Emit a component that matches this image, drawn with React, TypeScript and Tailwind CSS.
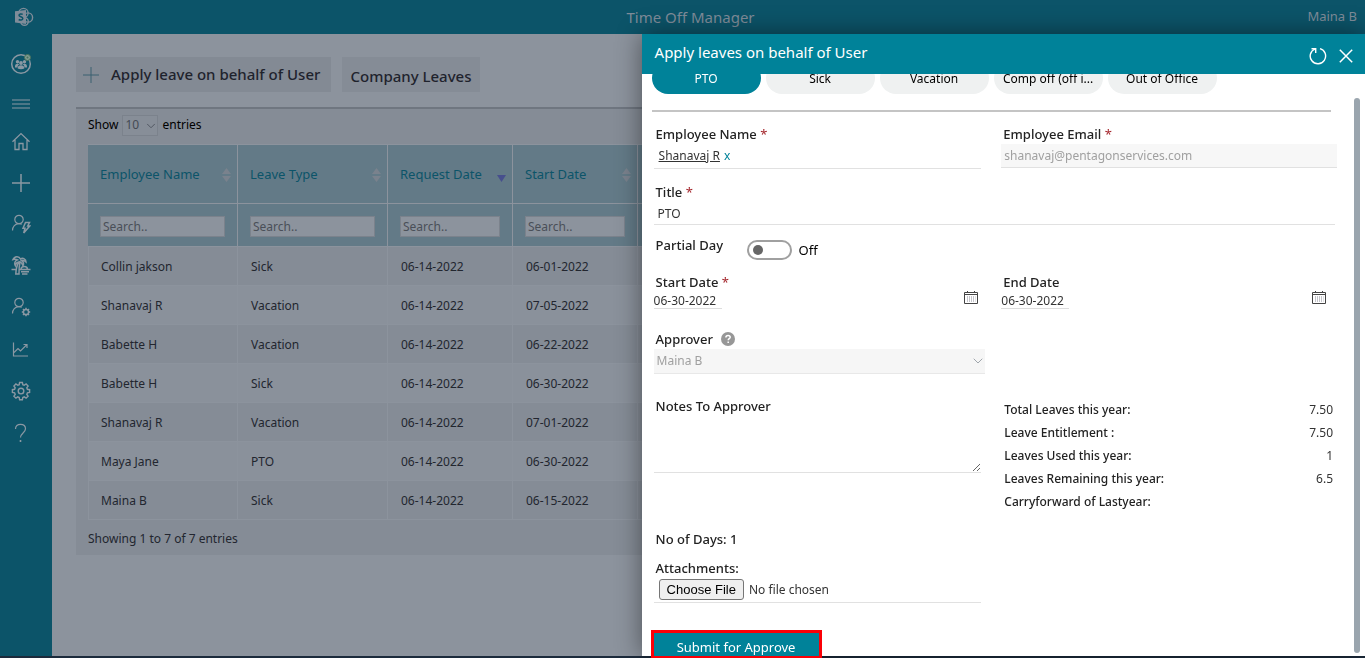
import React from "react";
import { ChevronDown } from "lucide-react";

const rows = [
  ["Collin jakson", "Sick", "06-14-2022", "06-01-2022"],
  ["Shanavaj R", "Vacation", "06-14-2022", "07-05-2022"],
  ["Babette H", "Vacation", "06-14-2022", "06-22-2022"],
  ["Babette H", "Sick", "06-14-2022", "06-30-2022"],
  ["Shanavaj R", "Vacation", "06-14-2022", "07-01-2022"],
  ["Maya Jane", "PTO", "06-14-2022", "06-30-2022"],
  ["Maina B", "Sick", "06-14-2022", "06-15-2022"],
];

const columns = ["Employee Name", "Leave Type", "Request Date", "Start Date"];

const leaveTypes = ["PTO", "Sick", "Vacation", "Comp off (off i...", "Out of Office"];

const balances = [
  ["Total Leaves this year:", "7.50"],
  ["Leave Entitlement :", "7.50"],
  ["Leaves Used this year:", "1"],
  ["Leaves Remaining this year:", "6.5"],
  ["Carryforward of Lastyear:", ""],
];

type IconProps = { children: React.ReactNode };

function NavIcon({ children }: IconProps) {
  return (
    <svg
      width="20"
      height="20"
      viewBox="0 0 20 20"
      fill="none"
      stroke="currentColor"
      strokeWidth="1.2"
      aria-hidden="true"
    >
      {children}
    </svg>
  );
}

function SharePointLogo() {
  return (
    <svg width="20" height="20" viewBox="0 0 20 20" fill="none" stroke="currentColor" aria-hidden="true">
      <circle cx="9.500" cy="6" r="4.600" strokeWidth="1.400" />
      <circle cx="14" cy="10.500" r="4.600" strokeWidth="1.400" />
      <circle cx="10.500" cy="14.500" r="3.800" strokeWidth="1.400" />
      <path d="M1 4.200 12 3v14L1 15.400z" fill="currentColor" stroke="none" />
      <path
        d="M8.700 7.400C7.700 6.800 5 6.700 5 8.300c0 1.800 3.800 1.200 3.800 3.200 0 1.900-2.800 1.800-4.100 1"
        stroke="#0c5469"
        strokeWidth="1.500"
      />
    </svg>
  );
}

function PeopleLogo() {
  return (
    <svg width="22" height="22" viewBox="0 0 22 22" fill="none" aria-hidden="true">
      <circle cx="11" cy="11" r="9.300" stroke="currentColor" strokeWidth="1.500" />
      <g fill="currentColor">
        <circle cx="7.500" cy="8.800" r="1.700" />
        <circle cx="14.500" cy="8.800" r="1.700" />
        <circle cx="11" cy="10" r="1.900" />
        <path d="M5 14.500c-.3-3 1-3.800 2.500-3.800.8 0 1.500.3 1.800.9-1.500.7-1.700 1.700-1.700 2.900zM17 14.500c.3-3-1-3.800-2.500-3.800-.8 0-1.500.3-1.800.9 1.500.7 1.700 1.700 1.700 2.900z" />
        <path d="M7.700 15.500c0-2.300 1.300-3.300 3.300-3.300s3.300 1 3.300 3.300c-1.800.9-4.800.9-6.600 0z" />
      </g>
      <circle cx="17.500" cy="4.500" r="3" fill="#7f9a91" stroke="#46715b" strokeWidth="1" />
      <circle cx="17.500" cy="4.500" r="1" fill="#46715b" />
    </svg>
  );
}

const gearPath =
  "M8.600 1.500h2.800l.4 2.200 1.400.6 1.900-1.300 2 2-1.300 1.900.6 1.400 2.200.4v2.800l-2.200.4-.6 1.400 1.300 1.900-2 2-1.900-1.300-1.400.6-.4 2.200H8.600l-.4-2.200-1.400-.6-1.900 1.300-2-2 1.300-1.900-.6-1.400-2.200-.4V8.700l2.200-.4.6-1.400L2.900 5l2-2 1.900 1.300 1.400-.6z";

const mainNav = [
  {
    label: "Home",
    icon: (
      <NavIcon>
        <path d="M1.500 9.800 10 1.600l8.500 8.200M4 8v9.500h4v-6h4v6h4V8" strokeWidth="1.300" />
      </NavIcon>
    ),
  },
  {
    label: "Add",
    icon: (
      <NavIcon>
        <path d="M10 1v18M1 10h18" strokeWidth="1.500" />
      </NavIcon>
    ),
  },
  {
    label: "Quick apply",
    icon: (
      <NavIcon>
        <circle cx="8" cy="5.500" r="4.200" />
        <path d="M1.500 16.500c0-4 2.600-6.800 6.500-6.800 1.200 0 2 .2 2.800.6" />
        <path d="M14.500 8.500h4l-1.800 3.500h2l-6 7 1.300-4.700h-2z" strokeWidth="1.500" />
      </NavIcon>
    ),
  },
];

const moreNav = [
  {
    label: "Holidays",
    icon: (
      <NavIcon>
        <g strokeWidth="1.500">
          <path d="M2 4.500C3.500 1 8 .8 9.500 4 12 2.500 15 4 15 7c-1.500-1.500-3-1.800-4.500-1.300 1.800 1 2.500 3 1.500 5-.6-2-1.600-3.300-3.200-4-2 .2-4 1.600-4.500 4-1.400-2.500-.3-5 2.200-5.800C5 4 3.500 4 2 4.500z" />
          <path d="M7.800 7c-1.800 3-2.800 7.500-3 12H8c-.1-4.500.2-8.500 1-12M8.500 14.500h11M.500 14.500h4M10 14.500c0-4 6.500-4 6.500 0M10 16.800h8M11 19h5.500" />
        </g>
      </NavIcon>
    ),
  },
  {
    label: "User settings",
    icon: (
      <NavIcon>
        <circle cx="8" cy="5.500" r="4.200" />
        <path d="M1.500 16.500c0-4 2.600-6.800 6.500-6.800 1.200 0 2 .2 2.800.6" />
        <circle cx="15" cy="15" r="2.600" strokeWidth="1.500" />
        <path d="M15 10.800v1.600M15 17.600v1.600M10.800 15h1.600M17.600 15h1.600M12 12l1.200 1.200M16.800 16.800 18 18M18 12l-1.200 1.200M13.200 16.800 12 18" strokeWidth="1.500" />
      </NavIcon>
    ),
  },
  {
    label: "Reports",
    icon: (
      <NavIcon>
        <path d="M2.500 3.500V17H17" />
        <path d="m3 13.500 4-4L9.500 12 16 5.500M12.500 5.500H16V9" />
      </NavIcon>
    ),
  },
  {
    label: "Settings",
    icon: (
      <NavIcon>
        <path d={gearPath} strokeWidth="1.400" />
        <circle cx="10" cy="10.100" r="2.800" strokeWidth="1.400" />
      </NavIcon>
    ),
  },
  {
    label: "Help",
    icon: (
      <NavIcon>
        <path d="M4.500 6c0-3 2-4.700 5-4.700s5 1.700 5 4.400c0 4-5 4.600-5 8.800" />
        <path d="M9.500 17v2" strokeWidth="1.600" />
      </NavIcon>
    ),
  },
];

function SortIcon({ active }: { active: boolean }) {
  return active ? (
    <svg width="9" height="14" viewBox="0 0 9 14" className="mt-1 shrink-0" aria-hidden="true">
      <path d="M0 5h9L4.500 12z" fill="#474f8d" />
    </svg>
  ) : (
    <svg width="9" height="16" viewBox="0 0 9 16" className="shrink-0" fill="#7a828d" aria-hidden="true">
      <path d="M0 7h9L4.500 1zM0 9h9l-4.500 6z" />
    </svg>
  );
}

function CalendarIcon() {
  return (
    <svg width="14" height="13" viewBox="0 0 14 13" fill="none" stroke="#444" aria-hidden="true">
      <path d="M.5 1.500h13v11H.5zM.5 3.500h13M3.500 0v2M10.500 0v2" />
      <path d="M3 6h8.500M3 8h8.500M3 10h8.500" stroke="#8a8a96" strokeDasharray="1 1" />
    </svg>
  );
}

function Required() {
  return <span className="font-normal text-[#a4262c]"> *</span>;
}

const labelClass = "block h-5 pl-0.5 text-[13px] leading-5 font-medium text-[#222]";

function DateField({ id, label, required }: { id: string; label: string; required?: boolean }) {
  return (
    <div className="flex items-end justify-between pr-[23px]">
      <div>
        <label htmlFor={id} className={labelClass}>
          {label}
          {required && <Required />}
        </label>
        <input
          id={id}
          defaultValue="06-30-2022"
          className="block h-[17px] w-[68px] border-b border-[#ddd] text-[12px] leading-4 outline-none"
        />
      </div>
      <button type="button" aria-label={"Pick " + label} className="mb-[5px]">
        <CalendarIcon />
      </button>
    </div>
  );
}

function LeaveTable() {
  return (
    <table className="mt-[9px] w-full table-fixed border-separate border-spacing-0 border-t border-[#8c939d] text-left text-[12px]">
      <colgroup>
        <col className="w-[150px]" />
        <col className="w-[150px]" />
        <col className="w-[125px]" />
        <col className="w-[125px]" />
        <col />
      </colgroup>
      <thead className="bg-[#637a87]">
        <tr className="h-[59px]">
          {columns.map((c) => (
            <th key={c} className="border-r border-b border-[#8c939d] pt-0.5 pr-1.5 pl-3 font-normal">
              <span className="flex items-center justify-between text-[13px] text-[#0c5469]">
                {c}
                <SortIcon active={c === "Request Date"} />
              </span>
            </th>
          ))}
          <th className="border-b border-[#8c939d]" />
        </tr>
        <tr className="h-[43px]">
          {columns.map((c) => (
            <th key={c} className="border-r border-b border-[#8c939d] px-3 pt-0.5 font-normal">
              <input
                aria-label={"Search " + c}
                placeholder="Search.."
                className="block h-[21px] w-full border border-[#7b828c] bg-[#8c939d] px-0.5 text-[12px] placeholder:text-[#4a4f58]"
              />
            </th>
          ))}
          <th className="border-b border-[#8c939d]" />
        </tr>
      </thead>
      <tbody className="text-[#22262f]">
        {rows.map((row, i) => (
          <tr key={i} className="h-[39px] even:bg-[#8a919b]">
            {row.map((cell, j) => (
              <td key={j} className="border-r border-b border-[#8c939d] pt-px pl-[13px] first:border-l first:pl-3">
                {cell}
              </td>
            ))}
            <td className="border-b border-[#8c939d]" />
          </tr>
        ))}
      </tbody>
    </table>
  );
}

function Drawer() {
  return (
    <aside className="fixed top-[34px] right-0 bottom-0.5 z-20 flex w-[53%] flex-col bg-white text-[#333] shadow-[0_0_24px_rgba(0,0,0,0.45)]">
      <header className="z-10 flex h-10 shrink-0 items-center bg-[#008299] pr-3 pl-[13px] text-white">
        <h2 className="flex-1 pb-1 text-[15px] leading-5">Apply leaves on behalf of User</h2>
        <div className="flex items-center gap-3 pt-1">
          <button type="button" aria-label="Refresh">
            <svg width="18" height="18" viewBox="0 0 18 18" fill="none" stroke="currentColor" strokeWidth="1.400">
              <path d="M11 1.600A7.700 7.700 0 1 1 6.200 1.800" />
              <path d="M2.500 1.700h4.200v4.200" />
            </svg>
          </button>
          <button type="button" aria-label="Close">
            <svg width="14" height="14" viewBox="0 0 14 14" fill="none" stroke="currentColor" strokeWidth="1.500">
              <path d="m.8.8 12.400 12.400M13.200.8.8 13.200" />
            </svg>
          </button>
        </div>
      </header>

      <div className="absolute top-16 right-[5px] bottom-[3px] w-1.5 rounded-full bg-[#9aa5ae]" />

      <form className="pr-4 pl-3" onSubmit={(e) => e.preventDefault()}>
        <div className="-mt-3 -ml-0.5 flex gap-[5px]">
          {leaveTypes.map((t, i) => (
            <button
              key={t}
              type="button"
              className={
                i === 0
                  ? "h-8 w-[109px] rounded-full bg-[#008299] pt-0.5 text-[12px] whitespace-nowrap text-white"
                  : "h-8 w-[109px] rounded-full bg-[#eff1f1] pt-0.5 text-[12px] whitespace-nowrap text-black"
              }
            >
              {t}
            </button>
          ))}
        </div>
        <hr className="mt-4 mr-[18px] -ml-0.5 h-0.5 border-0 bg-[#c4c4c4]" />

        <div className="mt-3 grid grid-cols-2">
          <div className="pr-5">
            <span className={labelClass}>
              Employee Name
              <Required />
            </span>
            <div className="flex h-[25px] items-center gap-1 border-b border-[#e1e1e1] pl-[5px] text-[12px]">
              <a href="#employee" className="underline">
                Shanavaj R
              </a>
              <button type="button" aria-label="Remove employee" className="text-[#008299]">
                x
              </button>
            </div>
          </div>
          <div className="pr-3">
            <label htmlFor="email" className={labelClass}>
              Employee Email
              <Required />
            </label>
            <input
              id="email"
              disabled
              value="shanavaj@pentagonservices.com"
              readOnly
              className="block h-6 w-full border-b border-[#e1e1e1] bg-[#f7f7f7] px-[3px] text-[12px] text-[#a0a0a0]"
            />
          </div>
        </div>

        <div className="mt-[13px] pr-3.5">
          <label htmlFor="title" className={labelClass}>
            Title
            <Required />
          </label>
          <input
            id="title"
            defaultValue="PTO"
            className="block h-[23px] w-full border-b border-[#e1e1e1] px-1 text-[12px] outline-none"
          />
        </div>

        <div className="mt-2.5 flex h-[25px]">
          <label htmlFor="partial" className="w-[93px] pl-0.5 text-[13px] leading-5 font-medium text-[#222]">
            Partial Day
          </label>
          <input
            id="partial"
            type="checkbox"
            role="switch"
            className="flex h-5 w-[45px] appearance-none items-center self-end rounded-full border-2 border-[#a0a0a0] px-1 before:size-2.5 before:rounded-full before:bg-[#666]"
          />
          <span className="self-end pl-[7px] text-[13px] leading-5 text-black">Off</span>
        </div>

        <div className="mt-3 grid grid-cols-2">
          <DateField id="start" label="Start Date" required />
          <DateField id="end" label="End Date" />
        </div>

        <div className="mt-5 w-1/2 pr-4">
          <div className="flex items-center gap-2">
            <label htmlFor="approver" className={labelClass}>
              Approver
            </label>
            <svg width="14" height="14" viewBox="0 0 14 14" aria-hidden="true">
              <circle cx="7" cy="7" r="7" fill="#979797" />
              <path
                d="M4.900 5.400c0-1.300.9-2 2.200-2s2.100.7 2.100 1.800c0 1.500-2 1.500-2 3.100M7.200 9.500v1.600"
                fill="none"
                stroke="#fff"
                strokeWidth="1.500"
              />
            </svg>
          </div>
          <div className="relative">
            <select
              id="approver"
              disabled
              className="block h-[25px] w-full appearance-none border-b border-[#e8e8e8] bg-[#f6f6f6] pl-[3px] text-[12px] text-[#a0a0a0] opacity-100"
            >
              <option>Maina B</option>
            </select>
            <ChevronDown className="absolute top-1 -right-px text-[#a0a6ac]" size={16} strokeWidth={1.5} />
          </div>
        </div>

        <div className="mt-[22px] grid grid-cols-2">
          <div className="pr-5">
            <label htmlFor="notes" className={labelClass}>
              Notes To Approver
            </label>
            <textarea
              id="notes"
              className="block h-[57px] w-full resize border-b border-[#e1e1e1] text-[12px] outline-none"
            />
          </div>
          <dl className="pt-0.5 pr-4 pl-[3px] text-[12px]">
            {balances.map(([name, value]) => (
              <div key={name} className="flex h-[23px] items-center justify-between">
                <dt className="font-medium text-[#222]">{name}</dt>
                <dd>{value}</dd>
              </div>
            ))}
          </dl>
        </div>

        <p className="mt-4 h-5 pl-0.5 text-[13px] leading-5 font-medium text-[#222]">No of Days: 1</p>

        <div className="mt-[9px] w-1/2 pr-5">
          <label htmlFor="files" className={labelClass}>
            Attachments:
          </label>
          <input
            id="files"
            type="file"
            className="block h-[25px] w-full border-b border-[#e1e1e1] pt-px pl-[5px] text-[12px] file:mr-[5px] file:h-[21px] file:rounded-[3px] file:border file:border-solid file:border-[#767676] file:bg-[#efefef] file:px-[7px] file:font-['Liberation_Sans'] file:text-[13px] file:text-black"
          />
        </div>

        <button
          type="submit"
          className="mt-[27px] -ml-[3px] block h-7 w-[171px] border-3 border-b-2 border-[#fb0007] bg-[#008299] pt-1 text-[13px] leading-5 text-white"
        >
          Submit for Approve
        </button>
      </form>
    </aside>
  );
}

export default function App() {
  return (
    <div className="flex min-h-screen flex-col overflow-hidden bg-[#8c939d] font-['Noto_Sans','Open_Sans',sans-serif]">
      <header className="grid h-[34px] grid-cols-[1fr_auto_1fr] items-center bg-[#0c5469] pr-2 pl-[14px] text-[#7f8c99]">
        <SharePointLogo />
        <h1 className="pl-2.5 text-[15px]">Time Off Manager</h1>
        <span className="justify-self-end text-[13px]">Maina B</span>
      </header>

      <div className="flex flex-1">
        <nav className="flex w-[52px] shrink-0 flex-col bg-[#0c5469] pt-2.5 text-[#8b98a3]">
          <a href="#profile" aria-label="Profile" className="flex h-10 items-center pl-2.5">
            <PeopleLogo />
          </a>
          <button type="button" aria-label="Menu" className="flex h-[37px] items-center pl-[11px]">
            <NavIcon>
              <path d="M1 7h18M1 11h18M1 15h18" />
            </NavIcon>
          </button>
          {mainNav.map((n) => (
            <a key={n.label} href="#nav" aria-label={n.label} className="flex h-[41px] items-center pl-[11px]">
              {n.icon}
            </a>
          ))}
          {moreNav.map((n) => (
            <a key={n.label} href="#nav" aria-label={n.label} className="flex h-[42px] items-center pl-[11px]">
              {n.icon}
            </a>
          ))}
        </nav>

        <main className="min-w-0 flex-1 pt-[23px] pl-6">
          <div className="flex gap-[11px]">
            <button
              type="button"
              className="flex h-[35px] w-[255px] items-center gap-3 bg-[#838a94] pl-[7px] text-[15px] font-medium whitespace-nowrap text-[#1f232d]"
            >
              <svg width="16" height="16" viewBox="0 0 16 16" stroke="#3b6071" aria-hidden="true">
                <path d="M8 0v16M0 8h16" />
              </svg>
              Apply leave on behalf of User
            </button>
            <button
              type="button"
              className="h-[35px] w-[138px] bg-[#858c96] pt-1 text-[15px] font-medium whitespace-nowrap text-[#1f232d]"
            >
              Company Leaves
            </button>
          </div>

          <section className="mt-[15px] border-t-2 border-[#6f7680] bg-[#858c96] px-3 pt-1.5 pb-1.5 text-[12px] text-[#22262f]">
            <div className="flex h-[20px] items-center gap-1 text-black">
              <label htmlFor="pageSize">Show</label>
              <div className="relative">
                <select
                  id="pageSize"
                  className="block h-[21px] w-9 appearance-none border border-[#7b828c] bg-[#878e98] pl-0.5 text-[12px] text-[#444a54]"
                >
                  <option>10</option>
                </select>
                <ChevronDown
                  className="pointer-events-none absolute top-1 right-0 text-[#4a505a]"
                  size={14}
                  strokeWidth={1.5}
                />
              </div>
              <span>entries</span>
            </div>
            <LeaveTable />
            <p className="mt-[9px] leading-5">Showing 1 to 7 of 7 entries</p>
          </section>
        </main>
      </div>
      <footer className="h-0.5 bg-[#1c2b3c]" />
      <Drawer />
    </div>
  );
}
